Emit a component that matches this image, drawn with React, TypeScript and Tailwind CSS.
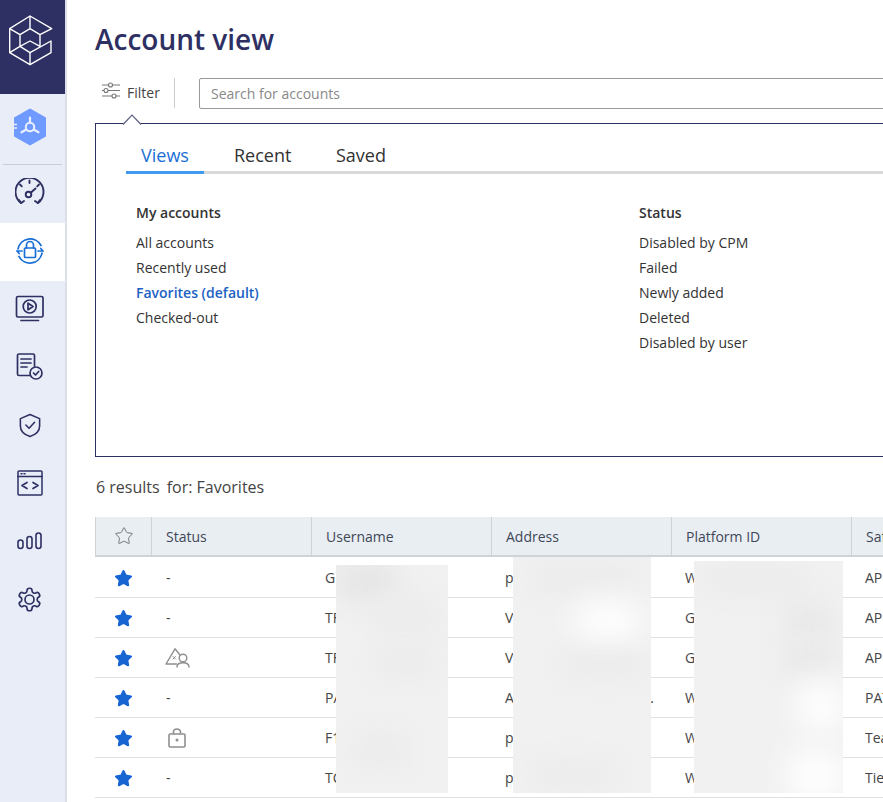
import { Star } from "lucide-react";

const navy = "#2e3063";

function Logo() {
  return (
    <svg width="66" height="94" viewBox="0 0 66 94" fill="none" stroke="#fff" strokeWidth="1.4" strokeLinejoin="round">
      <path d="M30 16 L9.7 28.7 V52.7 L30 64.7 L51 52.7 V41 L30 52.7 L20 46.3 L9.7 52.7" />
      <path d="M9.7 28.7 L20 34.7 V46.3 L30 41 L40 46.3 V34.7 L51.7 28.7 L30 16 V28.7 L20 34.7" />
      <path d="M30 28.7 L40 34.7 M30 52.7 V64.7" />
    </svg>
  );
}

function HexBadge() {
  return (
    <svg width="36" height="38" viewBox="0 0 36 38">
      <path d="M18 1.5 L33 10 V28 L18 36.5 L3 28 V10 Z" fill="#6f9aff" stroke="#6f9aff" strokeWidth="2" strokeLinejoin="round" />
      <path d="M2 16.5 H5 M2 20 H5" stroke="#e9edf7" strokeWidth="1.4" />
      <circle cx="18" cy="19" r="4.2" fill="none" stroke="#eaf0ff" strokeWidth="2" />
      <path d="M18 14.5 V9.5 M14.2 21.5 L9.5 24.3 M21.8 21.5 L26.5 24.3" stroke="#eaf0ff" strokeWidth="2.2" strokeLinecap="round" />
    </svg>
  );
}

function Gauge() {
  return (
    <svg width="30" height="30" viewBox="0 0 30 30" fill="none" stroke={navy} strokeWidth="1.9" strokeLinecap="round" strokeLinejoin="round">
      <path d="M6 25 A14 14 0 1 1 23 25" />
      <path d="M4 22 L6.2 25 L9 23 M25 22 L22.8 25 L20 23" />
      <circle cx="13.5" cy="16.5" r="2.8" />
      <path d="M16 14.5 L20.5 10.5 M14.5 2.5 V5 M5 6.5 L6.8 8.3 M24 6.5 L22.2 8.3" />
    </svg>
  );
}

function LockSync() {
  return (
    <svg width="28" height="28" viewBox="0 0 28 28" fill="none" stroke="#1a6fd6" strokeWidth="1.7" strokeLinecap="round" strokeLinejoin="round">
      <path d="M2 12 A12.3 12.3 0 0 1 25 8.5 M26 16 A12.3 12.3 0 0 1 3 19.5" />
      <path d="M1 14 L3.2 16.5 M1 14 H6 M27 14 L24.8 11.5 M27 14 H22" />
      <rect x="8.5" y="11" width="11" height="9.5" rx="0.8" />
      <path d="M10.5 11 V8 A3.5 3.5 0 0 1 17.5 8 V11" />
    </svg>
  );
}

function Video() {
  return (
    <svg width="30" height="28" viewBox="0 0 30 28" fill="none" stroke={navy} strokeWidth="1.7" strokeLinecap="round" strokeLinejoin="round">
      <rect x="1.5" y="1.5" width="26.5" height="20.5" rx="1.5" />
      <circle cx="14.7" cy="11.5" r="6.5" />
      <path d="M13 8.2 L18 11.5 L13 14.8 Z" />
      <path d="M6 25.5 H23.5" />
    </svg>
  );
}

function Report() {
  return (
    <svg width="28" height="28" viewBox="0 0 28 28" fill="none" stroke={navy} strokeWidth="1.7" strokeLinecap="round" strokeLinejoin="round">
      <path d="M14 22.5 H3 A1.5 1.5 0 0 1 1.5 21 V2.5 A1.5 1.5 0 0 1 3 1 H17 A1.5 1.5 0 0 1 18.5 2.5 V13" />
      <path d="M5 6 H15 M5 10 H15 M5 14 H11" />
      <circle cx="20" cy="20" r="6" />
      <path d="M17.5 20 L19.5 22 L22.7 18.5" />
    </svg>
  );
}

function Shield() {
  return (
    <svg width="22" height="25" viewBox="0 0 24 27" fill="none" stroke={navy} strokeWidth="1.7" strokeLinecap="round" strokeLinejoin="round">
      <path d="M12 1.5 L22.5 6 V14 C22.5 20 18 23.5 12 25.5 C6 23.5 1.5 20 1.5 14 V6 Z" />
      <path d="M7.5 13 L11 16.5 L17 10" />
    </svg>
  );
}

function CodeWindow() {
  return (
    <svg width="26" height="26" viewBox="0 0 26 26" fill="none" stroke={navy} strokeWidth="1.5" strokeLinecap="round" strokeLinejoin="round">
      <rect x="1" y="1" width="24" height="24" rx="1" />
      <path d="M1 6.5 H25 M4 3.8 H5 M7 3.8 H8" />
      <path d="M10 12.5 L5 15.5 L10 18.5 M16 12.5 L21 15.5 L16 18.5" strokeWidth="1.7" />
    </svg>
  );
}

function Bars() {
  return (
    <svg width="26" height="18" viewBox="0 0 26 18" fill="none" stroke={navy} strokeWidth="1.6">
      <rect x="1" y="8" width="5" height="8.5" rx="2.5" />
      <rect x="10" y="4.5" width="5" height="12" rx="2.5" />
      <rect x="19" y="1" width="5" height="15.5" rx="2.5" />
    </svg>
  );
}

function Gear() {
  return (
    <svg width="27" height="27" viewBox="0 0 24 24" fill="none" stroke={navy} strokeWidth="1.5" strokeLinecap="round" strokeLinejoin="round">
      <circle cx="12" cy="12" r="4" />
      <path d="M12.22 2h-.44a2 2 0 0 0-2 2v.18a2 2 0 0 1-1 1.73l-.43.25a2 2 0 0 1-2 0l-.15-.08a2 2 0 0 0-2.73.73l-.22.38a2 2 0 0 0 .73 2.73l.15.1a2 2 0 0 1 1 1.72v.51a2 2 0 0 1-1 1.74l-.15.09a2 2 0 0 0-.73 2.73l.22.38a2 2 0 0 0 2.73.73l.15-.08a2 2 0 0 1 2 0l.43.25a2 2 0 0 1 1 1.73V20a2 2 0 0 0 2 2h.44a2 2 0 0 0 2-2v-.18a2 2 0 0 1 1-1.73l.43-.25a2 2 0 0 1 2 0l.15.08a2 2 0 0 0 2.73-.73l.22-.39a2 2 0 0 0-.73-2.73l-.15-.08a2 2 0 0 1-1-1.74v-.5a2 2 0 0 1 1-1.74l.15-.09a2 2 0 0 0 .73-2.73l-.22-.38a2 2 0 0 0-2.73-.73l-.15.08a2 2 0 0 1-2 0l-.43-.25a2 2 0 0 1-1-1.73V4a2 2 0 0 0-2-2z" />
    </svg>
  );
}

function Sliders() {
  return (
    <svg width="20" height="18" viewBox="0 0 20 18" fill="none" stroke="#777" strokeWidth="1.1">
      <path d="M1 3 H7.5 M11.5 3 H19 M1 8.5 H3 M7 8.5 H19 M1 14 H11 M15 14 H19" />
      <circle cx="9.5" cy="3" r="2" />
      <circle cx="5" cy="8.5" r="2" />
      <circle cx="13" cy="14" r="2" />
    </svg>
  );
}

function UserWarning() {
  return (
    <svg width="25" height="20" viewBox="0 0 25 20" fill="none" stroke="#8f8f8f" strokeWidth="1.4" strokeLinecap="round" strokeLinejoin="round">
      <path d="M11.5 16 H1 L10 0.8 L15 7" />
      <path d="M8 8.5 L10.5 11 M10.5 8.5 L8 11" strokeWidth="1" />
      <circle cx="18" cy="10" r="3.8" />
      <path d="M12 19 C12 16 14.5 14.8 18 14.8 C21.5 14.8 24 16 24 19" />
    </svg>
  );
}

function Lock() {
  return (
    <svg width="18" height="20" viewBox="0 0 18 20" fill="none" stroke="#8f8f8f" strokeWidth="1.6" strokeLinejoin="round">
      <rect x="1" y="6" width="16" height="13" rx="1.2" />
      <path d="M5.5 6 V4 A3.5 3 0 0 1 12.5 4 V6" />
      <circle cx="9" cy="12" r="0.7" fill="#8f8f8f" />
    </svg>
  );
}

function FullStar() {
  return <Star size={19} fill="#1564d2" stroke="#1564d2" strokeWidth={1.5} />;
}

const navItems = [
  { icon: <Gauge /> },
  { icon: <LockSync />, active: true },
  { icon: <Video /> },
  { icon: <Report /> },
  { icon: <Shield /> },
  { icon: <CodeWindow /> },
  { icon: <Bars /> },
  { icon: <Gear /> },
];

const myAccounts = ["All accounts", "Recently used", "Favorites (default)", "Checked-out"];
const statusViews = ["Disabled by CPM", "Failed", "Newly added", "Deleted", "Disabled by user"];

const rows = [
  { status: "-", user: "G", addr: "p", plat: "W", safe: "APP" },
  { status: "-", user: "TF", addr: "V", plat: "G", safe: "APP" },
  { status: "user", user: "TF", addr: "V", plat: "G", safe: "APP" },
  { status: "-", user: "PA", addr: "A", plat: "W", safe: "PAT", cut: true },
  { status: "lock", user: "F1", addr: "p", plat: "W", safe: "Team" },
  { status: "-", user: "TC", addr: "p", plat: "W", safe: "Tier" },
];

const colGrid = "grid grid-cols-[57px_160px_180px_180px_180px_180px]";

export default function App() {
  return (
    <div className="flex h-screen w-full overflow-hidden bg-white font-['Open_Sans',sans-serif] text-[14px] text-[#333]">
      <aside className="flex w-[67px] shrink-0 flex-col border-r-2 border-[#dcdfe6] bg-[#e9edf7]">
        <div className="h-[94px] bg-[#2e3063]">
          <Logo />
        </div>
        <div className="flex h-[70px] items-start justify-center pt-[14px] pr-[5px]">
          <HexBadge />
        </div>
        <div className="mx-[3px] border-t border-[#c9ccd4]" />
        <div className="flex flex-col">
          {navItems.map((item, i) => (
            <div
              key={i}
              className={
                "flex h-[58px] items-center justify-center pr-[6px] pb-[2px]" +
                (item.active ? " bg-white" : "")
              }
            >
              {item.icon}
            </div>
          ))}
        </div>
      </aside>

      <main className="relative min-w-0 flex-1 overflow-hidden pl-[28px]">
        <h1 className="h-[78px] pt-[18px] text-[28px] leading-[42px] font-semibold text-[#2e3063]">
          Account view
        </h1>

        <div className="flex h-[30px] w-[900px] items-center">
          <div className="flex h-full w-[80px] items-center gap-[6px] border-r border-[#ccc] pb-[4px] pl-[6px] text-[#444]">
            <Sliders />
            <span className="pt-[2px]">Filter</span>
          </div>
          <input
            readOnly
            placeholder="Search for accounts"
            className="ml-[24px] h-[31px] flex-1 rounded-[2px] border border-[#999] px-[11px] text-[14px] placeholder:text-[#888]"
          />
        </div>

        <div className="relative mt-[15px] h-[334px] w-[900px] border border-[#2e3063]">
          <svg className="absolute top-[-10px] left-[26px]" width="20" height="11" viewBox="0 0 20 11">
            <path d="M1 10.5 L10 1 L19 10.5" fill="#fff" stroke="#5a5d80" strokeWidth="1.1" />
          </svg>

          <div className="mt-[19px] ml-[30px] flex h-[31px] border-b-[3px] border-[#d9d9d9] text-[18px] leading-[24px]">
            <div className="-mb-[3px] w-[78px] border-b-[3px] border-[#4299f0] pl-[15px] text-[#1a6fd6]">Views</div>
            <div className="ml-[30px] w-[102px] text-[#333]">Recent</div>
            <div className="text-[#333]">Saved</div>
          </div>

          <div className="mt-[28px] ml-[40px] flex">
            <div className="w-[503px]">
              <div className="mb-[7px] h-[21px] leading-[21px] font-semibold">My accounts</div>
              {myAccounts.map((t) => (
                <div
                  key={t}
                  className={
                    "h-[25px] leading-[25px] " + (t.startsWith("Favorites") ? "font-semibold text-[#1a62c4]" : "")
                  }
                >
                  {t}
                </div>
              ))}
            </div>
            <div>
              <div className="mb-[7px] h-[21px] leading-[21px] font-semibold">Status</div>
              {statusViews.map((t) => (
                <div key={t} className="h-[25px] leading-[25px]">
                  {t}
                </div>
              ))}
            </div>
          </div>
        </div>

        <div className="mt-[19px] flex h-[22px] gap-[7px] pl-[1px] text-[16px] leading-[22px] text-[#444]">
          <span>6 results</span>
          <span>for: Favorites</span>
        </div>

        <div className="mt-[19px] w-[937px]">
          <div className={colGrid + " h-[40px] border-b-2 border-[#d0d3d6] bg-[#e9eef3] text-[#3f4757]"}>
            <div className="flex items-center justify-center border-x border-[#d0d3d6]">
              <Star size={20} stroke="#777" strokeWidth={1.2} />
            </div>
            {["Status", "Username", "Address", "Platform ID", "Safe"].map((h) => (
              <div key={h} className="flex items-center border-r border-[#d0d3d6] pl-[14px]">
                {h}
              </div>
            ))}
          </div>
          <div className="pt-[1px]">
            {rows.map((r, i) => (
              <div key={i} className={colGrid + " h-[40px] items-center border-b border-[#e0e0e0] text-[#444]"}>
                <div className="flex justify-center pt-[1px]">
                  <FullStar />
                </div>
                <div className="flex items-center pl-[13px]">
                  {r.status === "-" && <span className="pl-[1px]">-</span>}
                  {r.status === "user" && <UserWarning />}
                  {r.status === "lock" && (
                    <span className="pl-[3px]">
                      <Lock />
                    </span>
                  )}
                </div>
                <div className="pl-[13px]">{r.user}</div>
                <div className="flex justify-between pr-[18px] pl-[13px]">
                  <span>{r.addr}</span>
                  {r.cut && <span>.</span>}
                </div>
                <div className="pl-[13px]">{r.plat}</div>
                <div className="pl-[13px]">{r.safe}</div>
              </div>
            ))}
          </div>
        </div>

        {/* redacted cells */}
        <div className="absolute top-[565px] left-[269px] h-[228px] w-[112px] overflow-hidden bg-[#f1f1f1]">
          <div className="absolute top-[-5px] left-[0px] h-[40px] w-[60px] bg-[#e6e6e6] blur-md" />
          <div className="absolute top-[35px] left-[40px] h-[30px] w-[60px] bg-[#ebebeb] blur-md" />
          <div className="absolute top-[85px] left-[40px] h-[25px] w-[60px] bg-[#ebebeb] blur-md" />
          <div className="absolute top-[170px] left-[20px] h-[30px] w-[50px] bg-[#ebebeb] blur-md" />
        </div>
        <div className="absolute top-[557px] left-[446px] h-[236px] w-[138px] overflow-hidden bg-[#f1f1f1]">
          <div className="absolute top-[10px] left-[20px] h-[25px] w-[100px] bg-[#ebebeb] blur-md" />
          <div className="absolute top-[45px] left-[65px] h-[40px] w-[60px] bg-white blur-lg" />
          <div className="absolute top-[95px] left-[50px] h-[25px] w-[80px] bg-[#ebebeb] blur-md" />
          <div className="absolute top-[205px] left-[20px] h-[25px] w-[80px] bg-[#ebebeb] blur-md" />
        </div>
        <div className="absolute top-[561px] left-[627px] h-[232px] w-[149px] overflow-hidden bg-[#f1f1f1]">
          <div className="absolute top-[5px] left-[10px] h-[25px] w-[100px] bg-[#ebebeb] blur-md" />
          <div className="absolute top-[45px] left-[90px] h-[30px] w-[50px] bg-[#e8e8e8] blur-md" />
          <div className="absolute top-[85px] left-[90px] h-[30px] w-[50px] bg-[#e8e8e8] blur-md" />
          <div className="absolute top-[120px] left-[105px] h-[50px] w-[44px] bg-white blur-lg" />
          <div className="absolute top-[190px] left-[95px] h-[50px] w-[54px] bg-white blur-lg" />
        </div>
      </main>
    </div>
  );
}
